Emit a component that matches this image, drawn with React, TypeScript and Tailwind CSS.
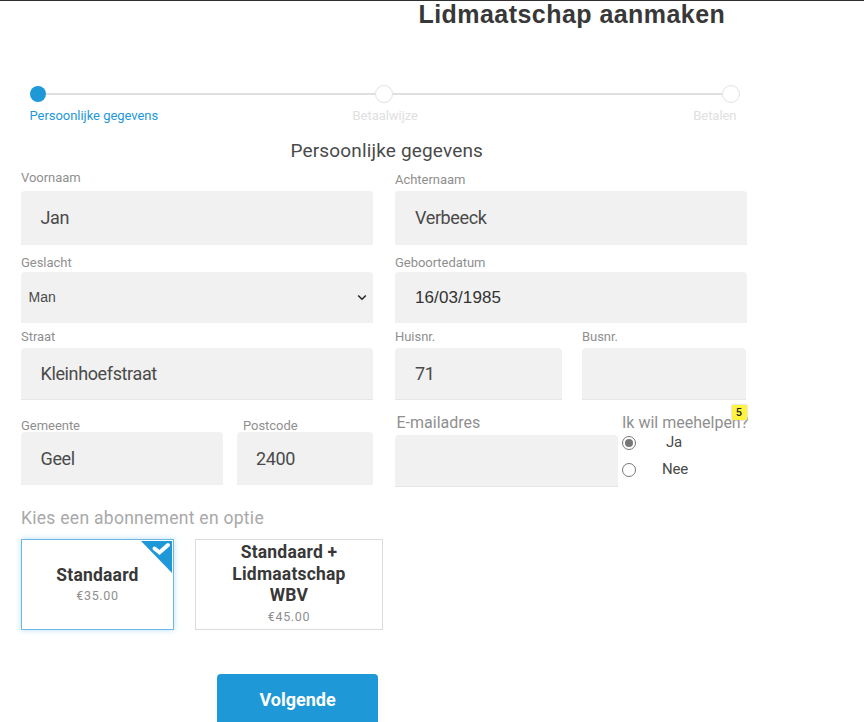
import { ReactNode } from "react";

function Field({
  label,
  labelClass = "",
  className = "",
  boxClass = "",
  children,
}: {
  label: string;
  labelClass?: string;
  className?: string;
  boxClass?: string;
  children?: ReactNode;
}) {
  return (
    <label className={`flex flex-col ${className}`}>
      <span className={`whitespace-nowrap text-[#8f8f8f] ${labelClass}`}>{label}</span>
      <span className={`flex items-center rounded-t-[4px] bg-[#f1f1f1] text-[#4a4a4a] ${boxClass}`}>{children}</span>
    </label>
  );
}

const small = "text-[13px] tracking-[-0.04px]";
const value = "text-[18px] tracking-[-0.37px]";

function Radio({ label, checked, textClass, className }: { label: string; checked?: boolean; textClass: string; className: string }) {
  return (
    <div className={`flex items-start ${className}`}>
      <span className="mt-px flex size-[14px] shrink-0 items-center justify-center rounded-full border border-[#777] bg-white">
        {checked && <span className="size-2 rounded-full bg-[#777]" />}
      </span>
      <span className={`text-[15px] leading-[14px] tracking-[-0.2px] text-[#4a4a4a] ${textClass}`}>{label}</span>
    </div>
  );
}

export default function App() {
  return (
    <div className="h-[722px] w-[864px] overflow-hidden border-t border-[#302e30] bg-white font-['Roboto',sans-serif]">
      <h1 className="ml-[418.5px] h-[84px] whitespace-nowrap font-['Liberation_Sans',sans-serif] text-[25px] font-bold leading-[27px] tracking-[0.45px] text-[#383838]">
        Lidmaatschap aanmaken
      </h1>

      <div className="ml-[30px] flex h-[18px] w-[710px] items-center">
        <span className="size-4 shrink-0 rounded-full bg-[#1f98d8]" />
        <span className="h-[2px] flex-1 bg-[#dfdfdf]" />
        <span className="size-[18px] shrink-0 rounded-full border border-[#e2e2e2] bg-white" />
        <span className="h-[2px] flex-1 bg-[#dfdfdf]" />
        <span className="size-[18px] shrink-0 rounded-full border border-[#e2e2e2] bg-white" />
      </div>
      <div className="ml-[29.5px] flex h-[32px] w-[707px] pt-[5px] text-[13px] leading-[16px] tracking-[-0.04px] text-[#e0e0e0]">
        <span className="w-[323px] text-[#1f98d8]">Persoonlijke gegevens</span>
        <span className="flex-1">Betaalwijze</span>
        <span>Betalen</span>
      </div>

      <h2 className="ml-[290.5px] h-[32px] text-[19px] leading-[32px] tracking-[0.16px] text-[#4a4a4a]">Persoonlijke gegevens</h2>

      <div className="ml-[21px] flex h-[78px] gap-[22px]">
        <Field label="Voornaam" className="w-[352px]" labelClass={`h-6 leading-[22px] ${small}`} boxClass={`h-[54px] pb-[2px] pl-[19.5px] ${value}`}>Jan</Field>
        <Field label="Achternaam" className="w-[352px]" labelClass={`h-6 leading-[26px] ${small}`} boxClass={`h-[54px] pb-[2px] pl-5 ${value}`}>Verbeeck</Field>
      </div>

      <div className="ml-[21px] flex h-[78px] gap-[22px] pt-[9px]">
        <Field label="Geslacht" className="w-[352px]" labelClass={`h-[18px] leading-[18px] ${small}`} boxClass="h-[51px] justify-between pl-[7.5px] pr-[6px] font-['Liberation_Sans',sans-serif] text-[14px]">
          Man
          <svg width="10" height="7" viewBox="0 0 10 7" fill="none" stroke="#222" strokeWidth="1.5">
            <path d="M1.2 1.5 5 5.2 8.8 1.5" />
          </svg>
        </Field>
        <Field label="Geboortedatum" className="w-[352px]" labelClass={`h-[18px] leading-[18px] ${small}`} boxClass="h-[51px] pl-5 font-['Liberation_Sans',sans-serif] text-[17px] tracking-[0.1px] text-[#333]">
          16/03/1985
        </Field>
      </div>

      <div className="ml-[21px] flex h-[78px] pt-[5px]">
        <Field label="Straat" className="mr-[22px] w-[352px]" labelClass={`h-5 leading-[18px] ${small}`} boxClass={`h-[52px] border-b border-[#e6e6e6] pb-px pl-[19.5px] ${value}`}>Kleinhoefstraat</Field>
        <Field label="Huisnr." className="mr-5 w-[167px]" labelClass={`h-5 leading-[18px] ${small}`} boxClass={`h-[52px] border-b border-[#e6e6e6] pb-px pl-5 ${value}`}>71</Field>
        <Field label="Busnr." className="w-[164px]" labelClass={`h-5 leading-[18px] ${small}`} boxClass="h-[52px] border-b border-[#e6e6e6]" />
      </div>

      <div className="ml-[21px] flex h-[105px] pt-[11px]">
        <Field label="Gemeente" className="mr-[14px] w-[202px]" labelClass={`h-5 leading-[28px] ${small}`} boxClass={`h-[53px] pl-[19.5px] ${value}`}>Geel</Field>
        <Field label="Postcode" className="mr-[22px] w-[136px]" labelClass={`h-5 pl-[6px] leading-[28px] ${small}`} boxClass={`h-[53px] pl-[19px] ${value}`}>2400</Field>
        <Field label="E-mailadres" className="w-[223px]" labelClass="h-[23px] pl-[1.5px] text-[16px] leading-[22px]" boxClass="h-[52px] border-b border-[#e6e6e6]" />
        <div className="relative ml-[4px] w-[126px]">
          <p className="h-[23px] whitespace-nowrap text-[16px] leading-[22px] text-[#8f8f8f]">Ik wil meehelpen?</p>
          <Radio label="Ja" checked textClass="ml-[30px]" className="h-[27px]" />
          <Radio label="Nee" textClass="ml-[26px]" className="h-[27px]" />
          <span className="absolute -top-[7px] left-[109.5px] flex size-[15px] items-center justify-center bg-[#fff33f] pt-px text-[11px] font-medium text-[#222] shadow-[0_0_2px_#bbb]">5</span>
        </div>
      </div>

      <h3 className="ml-[21px] h-[33px] text-[17.5px] leading-[24px] tracking-[0.28px] text-[#a8a8a8]">Kies een abonnement en optie</h3>

      <div className="ml-[21px] flex h-[135px] items-start gap-[21px] text-center">
        <div className="relative flex h-[91px] w-[153px] flex-col items-center border border-[#6db8e2] pt-[24px] shadow-[0_0_6px_#b8dff5]">
          <b className="text-[17.5px] font-bold leading-[22px] tracking-[0.2px] text-[#383838]">Standaard</b>
          <span className="text-[12.5px] leading-[20px] tracking-[0.7px] text-[#8f8f8f]">€35.00</span>
          <svg className="absolute right-px top-px" width="31" height="32" viewBox="0 0 31 32">
            <path d="M0 0H31V32Z" fill="#1f98d8" />
            <path d="M13.5 7.5 18.5 11.5 27 4" fill="none" stroke="#fff" strokeWidth="4" strokeLinecap="round" />
          </svg>
        </div>
        <div className="flex h-[91px] w-[188px] flex-col items-center border border-[#dcdcdc] pt-[2px]">
          <b className="w-[130px] text-[17.5px] font-bold leading-[21.7px] tracking-[0.2px] text-[#383838]">Standaard + Lidmaatschap WBV</b>
          <span className="text-[12.5px] leading-[20px] tracking-[0.7px] text-[#8f8f8f]">€45.00</span>
        </div>
      </div>

      <button className="ml-[217px] h-[52px] w-[161px] rounded-[4px] bg-[#1f98d8] pb-[2px] text-[18px] font-bold text-white">Volgende</button>
    </div>
  );
}
